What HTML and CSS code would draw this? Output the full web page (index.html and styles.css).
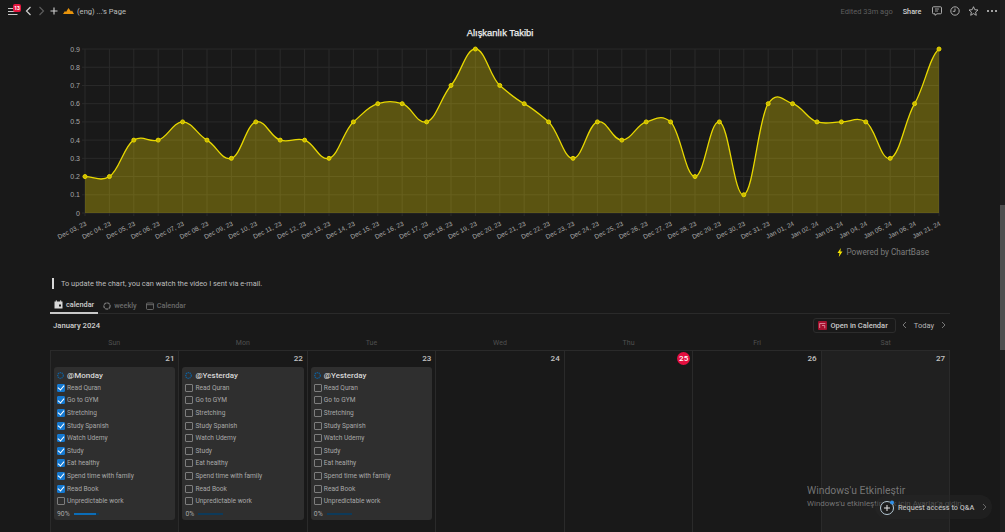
FILE: index.html
```html
<!DOCTYPE html>
<html lang="en">
<head>
<meta charset="utf-8">
<title>(eng) ...'s Page</title>
<link rel="stylesheet" href="styles.css">
</head>
<body>
<div class="app">
  <main class="page">
    <header class="topbar">
      <div class="nav-left">
        <span class="menu">
          <svg class="ic-menu" width="10" height="9" viewBox="0 0 10 9"><path d="M0 1.500h9.500M0 4.500h9.500M0 7.500h9.500" stroke="#c8c8c8" stroke-width="1.100"/></svg>
          <span class="badge">13</span>
        </span>
        <svg class="ic-back" width="7" height="10" viewBox="0 0 7 10"><path d="M5.500 1 1.500 5l4 4" fill="none" stroke="#d0d0d0" stroke-width="1.200"/></svg>
        <svg class="ic-fwd" width="7" height="10" viewBox="0 0 7 10"><path d="M1.500 1l4 4-4 4" fill="none" stroke="#5c5c5c" stroke-width="1.200"/></svg>
        <svg class="ic-plus" width="8" height="8" viewBox="0 0 8 8"><path d="M4 .5v7M.5 4h7" stroke="#d0d0d0" stroke-width="1.100"/></svg>
        <svg class="ic-mount" width="11" height="6" viewBox="0 0 11 6"><path d="M0 6 2 3l1 1 2.500-4L8 3.500l1-1L11 6z" fill="#e8940c"/></svg>
        <span class="crumb">(eng) ...'s Page</span>
      </div>
      <div class="nav-right">
        <span class="edited">Edited 33m ago</span>
        <span class="share">Share</span>
        <svg class="ic-comment" width="10" height="10" viewBox="0 0 10 10"><path d="M1.500.8h7a1 1 0 0 1 1 1v5a1 1 0 0 1-1 1H5L3 9.300V7.800H1.500a1 1 0 0 1-1-1v-5a1 1 0 0 1 1-1z" fill="none" stroke="#bbb" stroke-width=".9"/><path d="M3 3h4M3 5h3" stroke="#bbb" stroke-width=".8"/></svg>
        <svg class="ic-clock" width="10" height="10" viewBox="0 0 10 10"><circle cx="5" cy="5" r="4.200" fill="none" stroke="#bbb" stroke-width=".9"/><path d="M5 2.500V5.300H2.800" fill="none" stroke="#bbb" stroke-width=".9"/></svg>
        <svg class="ic-star" width="11" height="10" viewBox="0 0 11 10"><path d="M5.500.7l1.300 3 3.200.3-2.400 2.100.7 3.200-2.800-1.700-2.800 1.700.7-3.200L1 4l3.200-.3z" fill="none" stroke="#bbb" stroke-width=".9"/></svg>
        <span class="dots"><i></i><i></i><i></i></span>
      </div>
    </header>

    <svg class="chart" id="chart" width="1000" height="223" viewBox="0 24 1000 223" role="img" aria-label="Alışkanlık Takibi"></svg>

    <div class="powered">
      <svg width="6" height="9" viewBox="0 0 6 9"><path d="M3.800 0 .5 5h2L1.800 9 5.500 3.600H3.400z" fill="#f6e500"/></svg>
      <span>Powered by ChartBase</span>
    </div>

    <p class="callout">To update the chart, you can watch the video I sent via e-mail.</p>

    <nav class="tabs">
      <span class="tab active">
        <svg width="9" height="9" viewBox="0 0 9 9"><path d="M.5 1.500h8v7h-8z" fill="#d8d8d8"/><path d="M2.300.3v2M6.700.3v2" stroke="#d8d8d8"/><rect x="5" y="4.500" width="2" height="2" fill="#191919"/></svg>
        calendar
      </span>
      <span class="tab">
        <svg width="8" height="8" viewBox="0 0 8 8"><circle cx="4" cy="4" r="3.100" fill="none" stroke="#777" stroke-width="1.300" stroke-dasharray="3 .6"/></svg>
        weekly
      </span>
      <span class="tab">
        <svg width="8" height="8" viewBox="0 0 8 8"><rect x=".5" y="1" width="7" height="6.500" rx="1" fill="none" stroke="#777" stroke-width=".8"/><path d="M.5 2.700h7" stroke="#777" stroke-width=".8"/></svg>
        Calendar
      </span>
    </nav>

    <div class="cal-head">
      <span class="month">January 2024</span>
      <div class="cal-actions">
        <span class="open-btn">
          <svg width="9" height="9" viewBox="0 0 8 8"><rect width="8" height="8" rx="1" fill="#a5102e"/><path d="M1.500 2.200h5M1.500 2.200v4M3.500 4h2.500v2.500" fill="none" stroke="#e8a0ae" stroke-width=".7"/></svg>
          Open in Calendar
        </span>
        <svg class="chev chev-prev" width="5" height="8" viewBox="0 0 5 8"><path d="M4 1 1 4l3 3" fill="none" stroke="#777" stroke-width="1"/></svg>
        <span class="today">Today</span>
        <svg class="chev" width="5" height="8" viewBox="0 0 5 8"><path d="M1 1l3 3-3 3" fill="none" stroke="#777" stroke-width="1"/></svg>
      </div>
    </div>

    <div class="weekdays">
      <span>Sun</span><span>Mon</span><span>Tue</span><span>Wed</span><span>Thu</span><span>Fri</span><span>Sat</span>
    </div>

    <div class="grid">
      <section class="cell sunday">
        <div class="date">21</div>
        <article class="card">
          <h3 class="card-title"><svg width="7" height="7" viewBox="0 0 7 7"><circle cx="3.500" cy="3.500" r="2.800" fill="none" stroke="#0e5f9c" stroke-width="1.300" stroke-dasharray="1.300 .7"/></svg>@Monday</h3>
          <div class="row"><span class="box on"></span>Read Quran</div>
          <div class="row"><span class="box on"></span>Go to GYM</div>
          <div class="row"><span class="box on"></span>Stretching</div>
          <div class="row"><span class="box on"></span>Study Spanish</div>
          <div class="row"><span class="box on"></span>Watch Udemy</div>
          <div class="row"><span class="box on"></span>Study</div>
          <div class="row"><span class="box on"></span>Eat healthy</div>
          <div class="row"><span class="box on"></span>Spend time with family</div>
          <div class="row"><span class="box on"></span>Read Book</div>
          <div class="row"><span class="box"></span>Unpredictable work</div>
          <div class="progress"><span>90%</span><span class="bar"><i class="fill"></i></span></div>
        </article>
      </section>
      <section class="cell">
        <div class="date">22</div>
        <article class="card">
          <h3 class="card-title"><svg width="7" height="7" viewBox="0 0 7 7"><circle cx="3.500" cy="3.500" r="2.800" fill="none" stroke="#0e5f9c" stroke-width="1.300" stroke-dasharray="1.300 .7"/></svg>@Yesterday</h3>
          <div class="row"><span class="box"></span>Read Quran</div>
          <div class="row"><span class="box"></span>Go to GYM</div>
          <div class="row"><span class="box"></span>Stretching</div>
          <div class="row"><span class="box"></span>Study Spanish</div>
          <div class="row"><span class="box"></span>Watch Udemy</div>
          <div class="row"><span class="box"></span>Study</div>
          <div class="row"><span class="box"></span>Eat healthy</div>
          <div class="row"><span class="box"></span>Spend time with family</div>
          <div class="row"><span class="box"></span>Read Book</div>
          <div class="row"><span class="box"></span>Unpredictable work</div>
          <div class="progress"><span>0%</span><span class="bar"></span></div>
        </article>
      </section>
      <section class="cell">
        <div class="date">23</div>
        <article class="card">
          <h3 class="card-title"><svg width="7" height="7" viewBox="0 0 7 7"><circle cx="3.500" cy="3.500" r="2.800" fill="none" stroke="#0e5f9c" stroke-width="1.300" stroke-dasharray="1.300 .7"/></svg>@Yesterday</h3>
          <div class="row"><span class="box"></span>Read Quran</div>
          <div class="row"><span class="box"></span>Go to GYM</div>
          <div class="row"><span class="box"></span>Stretching</div>
          <div class="row"><span class="box"></span>Study Spanish</div>
          <div class="row"><span class="box"></span>Watch Udemy</div>
          <div class="row"><span class="box"></span>Study</div>
          <div class="row"><span class="box"></span>Eat healthy</div>
          <div class="row"><span class="box"></span>Spend time with family</div>
          <div class="row"><span class="box"></span>Read Book</div>
          <div class="row"><span class="box"></span>Unpredictable work</div>
          <div class="progress"><span>0%</span><span class="bar"></span></div>
        </article>
      </section>
      <section class="cell"><div class="date">24</div></section>
      <section class="cell"><div class="date"><span class="now">25</span></div></section>
      <section class="cell"><div class="date">26</div></section>
      <section class="cell weekend"><div class="date">27</div></section>
    </div>
  </main>
  <aside class="scrollbar"><span class="thumb"></span></aside>
</div>

<div class="watermark">
  <div class="wm-title">Windows'u Etkinleştir</div>
  <div class="wm-sub">Windows'u etkinleştirmek için Ayarlar'a gidin.</div>
</div>
<div class="qa-pill">
  <svg class="qa-icon" width="17" height="17" viewBox="0 0 17 17"><circle cx="8" cy="9" r="6.500" fill="#1d1d1d" stroke="#b8ccd8" stroke-width="1"/><path d="M8 6v6M5 9h6" stroke="#e8e8e8" stroke-width="1"/><circle cx="13" cy="3.500" r="2" fill="#2f8fe8"/></svg>
  <span>Request access to Q&amp;A</span>
  <svg class="qa-chev" width="5" height="8" viewBox="0 0 5 8"><path d="M1 1l3 3-3 3" fill="none" stroke="#666" stroke-width="1"/></svg>
</div>
<script src="chart.js"></script>
</body>
</html>
```

FILE: styles.css
```css
* { box-sizing: border-box; }
html, body { margin: 0; height: 100%; overflow: hidden; }
body {
  background: #191919;
  color: #cfcfcf;
  font-family: Roboto, "Noto Sans", sans-serif;
  font-size: 8px;
}
.app { display: flex; height: 532px; }
.page { flex: 1; min-width: 0; overflow: hidden; }

.scrollbar { width: 5px; background: #202020; padding-top: 205px; }
.thumb { display: block; height: 145px; background: #4f4f4f; }

.topbar {
  height: 24px;
  display: flex;
  align-items: center;
  justify-content: space-between;
  padding: 0 3px 2px 8px;
}
.nav-left, .nav-right { display: flex; align-items: center; }
.menu { position: relative; display: block; width: 10px; height: 9px; margin-right: 3px; }
.ic-menu { display: block; }
.badge {
  position: absolute;
  left: 5px;
  top: -3px;
  width: 8px;
  height: 8px;
  border-radius: 2px;
  background: #e5173f;
  color: #fff;
  font-size: 5px;
  font-weight: 700;
  line-height: 8px;
  text-align: center;
}
.ic-back { margin: 0 0 0 4px; }
.ic-fwd { margin-left: 6px; }
.ic-plus { margin-left: 5px; }
.ic-mount { margin-left: 5px; }
.crumb { margin-left: 3px; font-size: 7.600px; color: #bdbdbd; }
.edited { color: #5f5f5f; font-size: 7.500px; margin-right: 10px; }
.share { color: #cfcfcf; font-size: 7.300px; font-weight: 500; }
.ic-comment { margin-left: 10px; }
.ic-clock { margin-left: 8px; }
.ic-star { margin-left: 8px; }
.dots { display: flex; gap: 1.500px; margin-left: 8px; }
.dots i { width: 2.500px; height: 2.500px; border-radius: 50%; background: #cfcfcf; }

.chart { display: block; }
.chart text { font-family: "Liberation Sans", Arial, sans-serif; }
.chart .chart-title { font-size: 9.400px; fill: #f0f0f0; stroke: #f0f0f0; stroke-width: .25px; text-anchor: middle; }
.gridline { stroke: #2a2a2a; stroke-width: 1; }
.area { fill: rgba(255, 230, 0, .29); }
.line { fill: none; stroke: #e8d800; stroke-width: 1.300; }
.dot { fill: #cdbb00; stroke: #e8d800; stroke-width: 1; }
.chart .y-label { font-size: 7px; fill: #a8a8a8; text-anchor: end; }
.chart .x-label { font-size: 6.500px; fill: #ababab; text-anchor: end; }

.powered {
  height: 10px;
  display: flex;
  align-items: center;
  justify-content: flex-end;
  gap: 4px;
  padding-right: 71px;
  font-size: 8.200px;
  color: #7d7d7d;
}

.callout {
  margin: 21px 0 0 52px;
  height: 11px;
  border-left: 2px solid #d8d8d8;
  padding-left: 7px;
  font-size: 7.400px;
  line-height: 11px;
  color: #bdbdbd;
}

.tabs {
  margin: 8px 50px 0;
  height: 17px;
  display: flex;
  border-bottom: 1px solid #2a2a2a;
}
.tab {
  height: 17px;
  display: flex;
  align-items: center;
  gap: 3px;
  padding: 0 4px;
  margin-right: 1px;
  font-size: 7.300px;
  font-weight: 500;
  color: #6a6a6a;
}
.tab.active { color: #d0d0d0; border-bottom: 2px solid #c8c8c8; }

.cal-head {
  margin: 3px 54px 0 53px;
  height: 16px;
  display: flex;
  align-items: center;
  justify-content: space-between;
}
.month { font-size: 7.700px; font-weight: 500; color: #cfcfcf; }
.cal-actions { display: flex; align-items: center; }
.open-btn {
  height: 15px;
  display: flex;
  align-items: center;
  gap: 3px;
  padding: 0 7px 0 4px;
  border: 1px solid #2c2c2c;
  border-radius: 3px;
  font-size: 7.500px;
  font-weight: 500;
  color: #c8c8c8;
}
.chev { margin-left: 7px; }
.chev-prev { margin-left: 6px; }
.today { margin-left: 7px; font-size: 7.500px; color: #b5b5b5; }

.weekdays {
  margin: 5px 50px 0;
  height: 12px;
  display: grid;
  grid-template-columns: repeat(7, 1fr);
  text-align: center;
  font-size: 7px;
  line-height: 10px;
  color: #505050;
}

.grid {
  margin: 0 50px;
  height: 200px;
  display: grid;
  grid-template-columns: repeat(7, 1fr);
  border-top: 1px solid #2a2a2a;
  border-right: 1px solid #2a2a2a;
}
.cell { border-left: 1px solid #2a2a2a; padding: 0 3px; min-width: 0; }
.cell.sunday { background: #1d1d1d; }
.cell.weekend { background: #202020; }
.date {
  height: 16px;
  padding-right: 1px;
  text-align: right;
  font-size: 8px;
  font-weight: 500;
  line-height: 15px;
  color: #c4c4c4;
}
.now {
  display: inline-block;
  width: 13px;
  height: 13px;
  margin: 1px -2px 0 0;
  border-radius: 50%;
  background: #e5103f;
  color: #fff;
  text-align: center;
  line-height: 13px;
}

.card {
  height: 153px;
  background: #2f2f2f;
  border-radius: 3px;
  padding: 3px 3px 2px;
}
.card-title {
  margin: 0;
  height: 11.500px;
  display: flex;
  align-items: center;
  gap: 3px;
  font-size: 8px;
  font-weight: 500;
  color: #d8d8d8;
}
.row {
  height: 12.600px;
  display: flex;
  align-items: center;
  gap: 2px;
  font-size: 6.600px;
  color: #a8a8a8;
  white-space: nowrap;
}
.box {
  position: relative;
  flex: none;
  width: 8px;
  height: 8px;
  border: 1px solid #7d7d7d;
  border-radius: 1px;
}
.box.on { background: #1478d0; border-color: #1478d0; }
.box.on::after {
  content: "";
  position: absolute;
  left: 1px;
  top: -.500px;
  width: 3px;
  height: 5px;
  border: solid #fff;
  border-width: 0 1px 1px 0;
  transform: rotate(40deg);
}
.progress {
  height: 12.600px;
  display: flex;
  align-items: center;
  gap: 4px;
  font-size: 6.800px;
  color: #a8a8a8;
}
.bar { display: block; width: 25px; height: 2px; background: #0d3a5a; }
.fill { display: block; width: 90%; height: 100%; background: #0b6db8; }

.qa-pill {
  position: absolute;
  left: 875px;
  top: 495px;
  width: 117px;
  height: 24px;
  display: flex;
  align-items: center;
  gap: 2px;
  padding: 0 5px 0 4px;
  border-radius: 12px;
  background: rgba(38, 38, 38, .5);
  font-size: 7.300px;
  font-weight: 500;
  color: #b8b8b8;
  white-space: nowrap;
}
.qa-icon, .qa-chev { flex: none; }
.qa-chev { margin-left: 6px; }
.watermark {
  position: absolute;
  left: 807px;
  top: 483px;
  color: rgba(190, 190, 190, .55);
  white-space: nowrap;
}
.wm-title { font-size: 10.400px; line-height: 15px; }
.wm-sub { font-size: 7.900px; line-height: 11px; }
```

FILE: chart.js
```js
var values = [.2,.2,.4,.4,.5,.4,.3,.5,.4,.4,.3,.5,.6,.6,.5,.7,.9,.7,.6,.5,.3,.5,.4,.5,.5,.2,.5,.1,.6,.6,.5,.5,.5,.3,.6,.9];
var labels = [];
for (var d = 3; d <= 31; d++) labels.push("Dec " + (d < 10 ? "0" : "") + d + ", 23");
for (var j = 1; j <= 6; j++) labels.push("Jan 0" + j + ", 24");
labels.push("Jan 21, 24");

var X0 = 85, X1 = 939, Y0 = 213, UNIT = 182.2;
var step = (X1 - X0) / (values.length - 1);
var NS = "http://www.w3.org/2000/svg";
var svg = document.getElementById("chart");

function el(name, attrs, text) {
  var n = document.createElementNS(NS, name);
  for (var k in attrs) n.setAttribute(k, attrs[k]);
  if (text !== undefined) n.textContent = text;
  svg.appendChild(n);
  return n;
}

el("text", { class: "chart-title", x: 500, y: 36 }, "Alışkanlık Takibi");

for (var i = 0; i <= 9; i++) {
  var gy = Y0 - i * UNIT / 10;
  el("line", { class: "gridline", x1: X0 - 3, x2: X1, y1: gy, y2: gy });
  el("text", { class: "y-label", x: 80, y: gy + 2.5 }, i === 0 ? "0" : (i / 10).toFixed(1));
}

var pts = values.map(function (v, i) { return [X0 + i * step, Y0 - v * UNIT]; });
pts.forEach(function (p, i) {
  el("line", { class: "gridline", x1: p[0], x2: p[0], y1: Y0 - .9 * UNIT, y2: Y0 + 3 });
  var x = p[0] + 2, y = 225;
  el("text", { class: "x-label", x: x, y: y, transform: "rotate(-27 " + x + " " + y + ")" }, labels[i]);
});

var T = 0.15;
var path = "M" + pts[0][0] + " " + pts[0][1];
for (var s = 0; s < pts.length - 1; s++) {
  var p0 = pts[Math.max(s - 1, 0)], p1 = pts[s], p2 = pts[s + 1], p3 = pts[Math.min(s + 2, pts.length - 1)];
  path += "C" + (p1[0] + step * .4).toFixed(2) + " " + (p1[1] + (p2[1] - p0[1]) * T).toFixed(2) +
          " " + (p2[0] - step * .4).toFixed(2) + " " + (p2[1] - (p3[1] - p1[1]) * T).toFixed(2) +
          " " + p2[0].toFixed(2) + " " + p2[1].toFixed(2);
}
el("path", { class: "area", d: path + "L" + X1 + " " + Y0 + "L" + X0 + " " + Y0 + "Z" });
el("path", { class: "line", d: path });
pts.forEach(function (p) { el("circle", { class: "dot", cx: p[0], cy: p[1], r: 2 }); });
```
